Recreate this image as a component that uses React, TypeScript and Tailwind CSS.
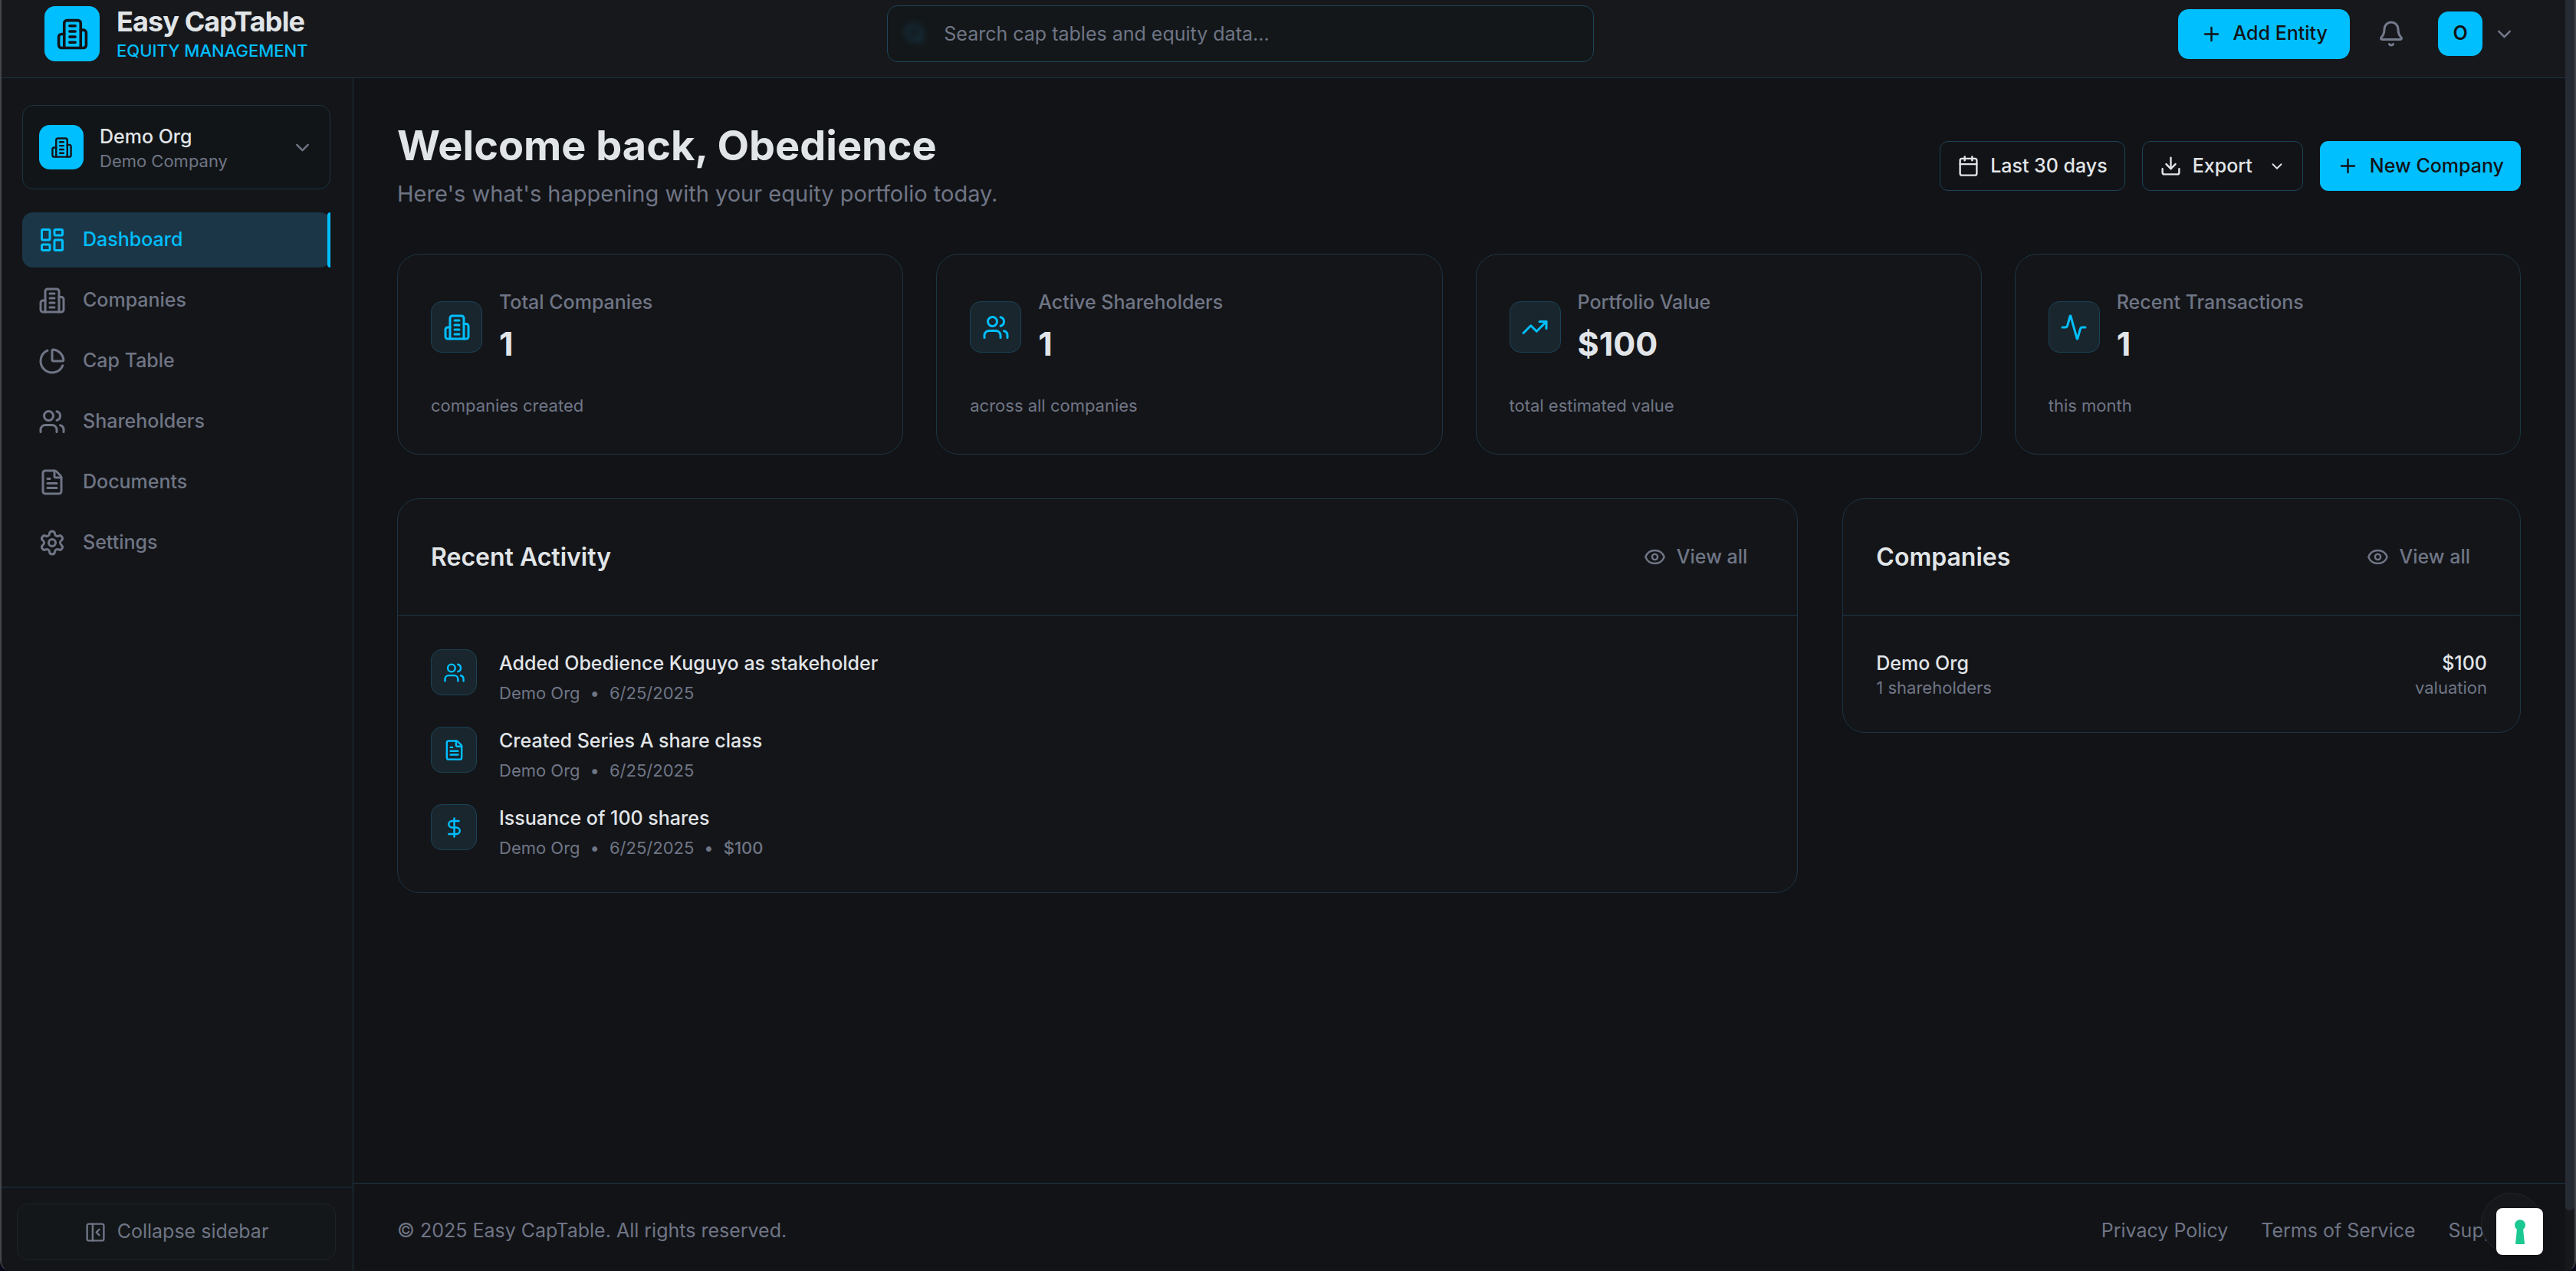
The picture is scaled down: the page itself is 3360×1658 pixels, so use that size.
import type { ReactNode } from "react";
import {
  Activity,
  Bell,
  Calendar,
  ChevronDown,
  DollarSign,
  Download,
  Eye,
  FileText,
  LayoutDashboard,
  PanelLeftClose,
  PieChart,
  Plus,
  Search,
  Settings,
  TrendingUp,
  Users,
  type LucideIcon,
} from "lucide-react";

type IconProps = { className?: string };

function CompanyIcon({ className }: IconProps) {
  return (
    <svg
      className={className}
      viewBox="0 0 24 24"
      fill="none"
      stroke="currentColor"
      strokeWidth="2"
      strokeLinecap="round"
      strokeLinejoin="round"
      aria-hidden="true"
    >
      <path d="M6 22V4a2 2 0 0 1 2-2h8a2 2 0 0 1 2 2v18Z" />
      <path d="M6 12H4a2 2 0 0 0-2 2v6a2 2 0 0 0 2 2h2" />
      <path d="M18 9h2a2 2 0 0 1 2 2v9a2 2 0 0 1-2 2h-2" />
      <path d="M10 6h4" />
      <path d="M10 10h4" />
      <path d="M10 14h4" />
      <path d="M10 18h4" />
    </svg>
  );
}

type IconType = LucideIcon | typeof CompanyIcon;

const navItems: { label: string; icon: IconType; active?: boolean }[] = [
  { label: "Dashboard", icon: LayoutDashboard, active: true },
  { label: "Companies", icon: CompanyIcon },
  { label: "Cap Table", icon: PieChart },
  { label: "Shareholders", icon: Users },
  { label: "Documents", icon: FileText },
  { label: "Settings", icon: Settings },
];

const stats: { label: string; value: string; note: string; icon: IconType }[] = [
  { label: "Total Companies", value: "1", note: "companies created", icon: CompanyIcon },
  { label: "Active Shareholders", value: "1", note: "across all companies", icon: Users },
  { label: "Portfolio Value", value: "$100", note: "total estimated value", icon: TrendingUp },
  { label: "Recent Transactions", value: "1", note: "this month", icon: Activity },
];

const activities: { title: string; org: string; date: string; amount?: string; icon: IconType }[] = [
  { title: "Added Obedience Kuguyo as stakeholder", org: "Demo Org", date: "6/25/2025", icon: Users },
  { title: "Created Series A share class", org: "Demo Org", date: "6/25/2025", icon: FileText },
  { title: "Issuance of 100 shares", org: "Demo Org", date: "6/25/2025", amount: "$100", icon: DollarSign },
];

const companies = [{ name: "Demo Org", holders: "1 shareholders", value: "$100" }];

function Header() {
  return (
    <header className="flex items-center justify-between h-[102px] pl-[56px] pr-[65px] pb-[13px] bg-[#17181c] border-b border-[#1b3543]">
      <div className="flex items-center gap-[22px] w-[338px] whitespace-nowrap">
        <div className="flex items-center justify-center shrink-0 size-[72px] rounded-[14px] bg-[#00bfff] text-[#121317]">
          <CompanyIcon className="size-[43px]" />
        </div>
        <div className="pt-[4px]">
          <div className="text-[36px] leading-[40px] font-bold tracking-tight text-[#e1e5e8]">Easy CapTable</div>
          <div className="text-[22px] leading-[36px] font-medium text-[#00bfff]">EQUITY MANAGEMENT</div>
        </div>
      </div>

      <div className="relative w-[922px]">
        <Search className="absolute left-[22px] top-[22px] size-[29px] text-[#1a4a66] blur-[5px]" />
        <input
          type="text"
          aria-label="Search"
          placeholder="Search cap tables and equity data..."
          className="w-full h-[74px] pl-[73px] pr-[22px] rounded-[14px] border border-[#1c4558] bg-[#131719] text-[25px] text-[#e1e5e8] placeholder:text-[#6f7585]"
        />
      </div>

      <div className="flex items-center">
        <button className="flex items-center gap-[14px] h-[65px] px-[29px] rounded-[14px] bg-[#00bfff] text-[#121317] text-[25px] font-medium">
          <Plus className="size-[29px]" />
          Add Entity
        </button>
        <button aria-label="Notifications" className="ml-[36px] text-[#747b8c]">
          <Bell className="size-[36px]" />
        </button>
        <button aria-label="Account menu" className="flex items-center gap-[14px] ml-[43px] text-[#747b8c]">
          <span className="flex items-center justify-center size-[58px] rounded-[14px] bg-[#00bfff] text-[#121317] text-[25px] font-semibold">
            O
          </span>
          <ChevronDown className="size-[29px]" />
        </button>
      </div>
    </header>
  );
}

function Sidebar() {
  return (
    <aside className="flex flex-col w-[459px] shrink-0 bg-[#141519] border-r border-[#1b3543]">
      <div className="flex-1 pl-[27px] pr-[29px] pt-[35px]">
        <button className="flex items-center w-full h-[110px] px-[21px] rounded-[14px] border border-[#1b3543] bg-[#121517] text-left">
          <span className="flex items-center justify-center size-[58px] rounded-[14px] bg-[#00bfff] text-[#121317]">
            <CompanyIcon className="size-[29px]" />
          </span>
          <span className="flex-1 ml-[21px] pt-[3px]">
            <span className="block text-[25px] leading-[32px] font-medium text-[#e1e5e8]">Demo Org</span>
            <span className="block text-[22px] leading-[32px] text-[#6f7585]">Demo Company</span>
          </span>
          <ChevronDown className="size-[29px] text-[#6f7585]" />
        </button>

        <nav className="flex flex-col gap-[7px] mt-[30px]">
          {navItems.map(({ label, icon: Icon, active }) => (
            <a
              key={label}
              href="#"
              className={
                active
                  ? "relative flex items-center gap-[22px] h-[72px] px-[21px] rounded-[14px] bg-[#1b3747] text-[25px] font-medium text-[#00bfff]"
                  : "flex items-center gap-[22px] h-[72px] px-[21px] rounded-[14px] text-[25px] font-medium text-[#6f7585]"
              }
            >
              <Icon className="size-[36px]" />
              {label}
              {active && <span className="absolute right-0 inset-y-0 w-[4px] rounded-l-[4px] bg-[#00bfff]" />}
            </a>
          ))}
        </nav>
      </div>

      <div className="h-[110px] pl-[20px] pr-[22px] pt-[21px] border-t border-[#1b3543]">
        <button className="flex items-center justify-center gap-[14px] w-full h-[74px] rounded-[14px] border border-[#1c2226] bg-[#131719] text-[25px] text-[#6f7585]">
          <PanelLeftClose className="size-[29px]" />
          Collapse sidebar
        </button>
      </div>
    </aside>
  );
}

function StatCard({ label, value, note, icon: Icon }: (typeof stats)[number]) {
  return (
    <div className="px-[43px] pt-[44px] pb-[48px] rounded-[29px] border border-[#1b3543] bg-[#141519]">
      <div className="flex items-center gap-[22px]">
        <div className="flex items-center justify-center size-[67px] rounded-[14px] border border-[#1b4356] bg-[#19262e] text-[#00bfff]">
          <Icon className="size-[36px]" />
        </div>
        <div>
          <div className="text-[25px] leading-[36px] font-medium text-[#6f7585]">{label}</div>
          <div className="mt-[7px] text-[43px] leading-[58px] font-bold text-[#e1e5e8]">{value}</div>
        </div>
      </div>
      <div className="mt-[38px] text-[22px] leading-[29px] text-[#6f7585]">{note}</div>
    </div>
  );
}

function Panel({ title, className, children }: { title: string; className?: string; children: ReactNode }) {
  return (
    <section className={`rounded-[29px] border border-[#1b3543] bg-[#141519] ${className ?? ""}`}>
      <div className="flex items-center justify-between p-[43px] border-b border-[#1b3543]">
        <h2 className="text-[32px] leading-[43px] font-semibold text-[#e1e5e8]">{title}</h2>
        <button className="flex items-center gap-[14px] h-[65px] px-[22px] text-[25px] font-medium text-[#6f7585]">
          <Eye className="size-[29px]" />
          View all
        </button>
      </div>
      <div className="px-[43px] pt-[44px] pb-[43px]">{children}</div>
    </section>
  );
}

function Dashboard() {
  return (
    <main className="flex-1 pl-[57px] pr-[58px] py-[58px]">
      <div className="flex items-center justify-between">
        <div>
          <h1 className="text-[54px] leading-[60px] font-bold text-[#e1e5e8]">Welcome back, Obedience</h1>
          <p className="mt-[12px] text-[29px] leading-[41px] text-[#6f7585]">
            Here's what's happening with your equity portfolio today.
          </p>
        </div>
        <div className="flex items-center gap-[22px] text-[25px] font-medium">
          <button className="flex items-center gap-[14px] h-[65px] px-[22px] rounded-[11px] border border-[#1d4357] text-[#e1e5e8]">
            <Calendar className="size-[29px]" />
            Last 30 days
          </button>
          <button className="flex items-center gap-[14px] h-[65px] px-[22px] rounded-[11px] border border-[#1d4357] text-[#e1e5e8]">
            <Download className="size-[29px]" />
            Export
            <ChevronDown className="ml-[7px] size-[22px]" />
          </button>
          <button className="flex items-center gap-[14px] h-[65px] px-[22px] rounded-[11px] bg-[#00bfff] text-[#121317]">
            <Plus className="size-[29px]" />
            New Company
          </button>
        </div>
      </div>

      <div className="grid grid-cols-4 gap-[43px] mt-[58px]">
        {stats.map((stat) => (
          <StatCard key={stat.label} {...stat} />
        ))}
      </div>

      <div className="grid grid-cols-3 items-start gap-[58px] mt-[57px]">
        <Panel title="Recent Activity" className="col-span-2">
          <ul className="flex flex-col gap-[29px]">
            {activities.map(({ title, org, date, amount, icon: Icon }) => (
              <li key={title} className="flex items-start gap-[29px]">
                <div className="flex items-center justify-center size-[60px] rounded-[14px] border border-[#1b4356] bg-[#19262e] text-[#00bfff]">
                  <Icon className="size-[29px]" />
                </div>
                <div>
                  <div className="text-[25px] leading-[36px] font-medium text-[#e1e5e8]">{title}</div>
                  <div className="flex gap-[13px] mt-[7px] text-[22px] leading-[29px] text-[#6f7585]">
                    <span>{org}</span>
                    <span>•</span>
                    <span>{date}</span>
                    {amount && <span>•</span>}
                    {amount && <span className="font-medium">{amount}</span>}
                  </div>
                </div>
              </li>
            ))}
          </ul>
        </Panel>

        <Panel title="Companies">
          {companies.map((company) => (
            <div key={company.name} className="flex items-center justify-between">
              <div>
                <div className="text-[25px] leading-[36px] font-medium text-[#e1e5e8]">{company.name}</div>
                <div className="text-[22px] leading-[29px] text-[#6f7585]">{company.holders}</div>
              </div>
              <div className="text-right">
                <div className="text-[25px] leading-[36px] font-medium text-[#e1e5e8]">{company.value}</div>
                <div className="text-[22px] leading-[29px] text-[#6f7585]">valuation</div>
              </div>
            </div>
          ))}
        </Panel>
      </div>
    </main>
  );
}

function Footer() {
  return (
    <footer className="flex items-start justify-between h-[115px] pl-[57px] pr-[58px] pt-[43px] border-t border-[#1b3543] text-[25px] leading-[36px] text-[#6f7585]">
      <p>© 2025 Easy CapTable. All rights reserved.</p>
      <div className="flex gap-[43px]">
        <a href="#">Privacy Policy</a>
        <a href="#">Terms of Service</a>
        <a href="#">Support</a>
      </div>
    </footer>
  );
}

function FloatingBadge() {
  return (
    <>
      <div className="fixed right-[44px] bottom-[22px] size-[80px] rounded-full border border-[#25262c] bg-[#16171b]" />
      <button
        aria-label="Open password manager"
        className="fixed right-[43px] bottom-[21px] flex items-center justify-center size-[61px] rounded-[8px] bg-white shadow-lg"
      >
        <svg viewBox="0 0 16 34" className="w-[16px] h-[34px] fill-[#1cc892]" aria-hidden="true">
          <circle cx="8" cy="8" r="7" />
          <path d="M4 13h8l2 20H2z" />
        </svg>
      </button>
    </>
  );
}

export default function App() {
  return (
    <div className="bg-[#08081a]">
      <div className="flex min-h-screen overflow-hidden rounded-b-[14px] bg-[#121317] font-[Inter,sans-serif] antialiased border-x-2 border-[#45464a]">
        <div className="flex flex-col flex-1 min-w-0">
          <Header />
          <div className="flex flex-1">
            <Sidebar />
            <div className="flex flex-col flex-1 min-w-0">
              <Dashboard />
              <Footer />
            </div>
          </div>
        </div>
        {/* scroll track */}
        <div className="flex w-[12px] shrink-0 pb-[79px] bg-[#17181c]">
          <div className="w-full rounded-b-full bg-[#262a33]" />
        </div>
      </div>
      <FloatingBadge />
    </div>
  );
}
